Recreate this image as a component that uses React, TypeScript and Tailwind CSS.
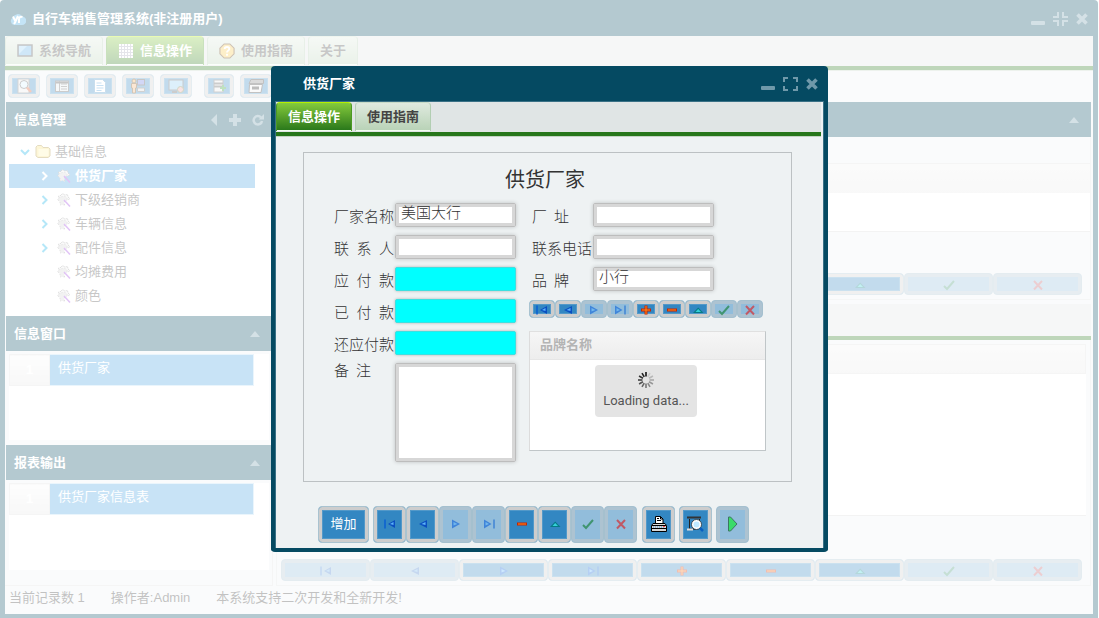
import type { ReactNode } from 'react'
import clsx from 'clsx'

type GlyphName = 'first' | 'prev' | 'next' | 'last' | 'plus' | 'minus' | 'up' | 'check' | 'cross'

type NavItem = { name: GlyphName; label: string; disabled?: boolean }

function Glyph({ name }: { name: GlyphName }) {
  return (
    <svg width="14" height="12" viewBox="0 0 14 12" className="shrink-0" aria-hidden="true">
      {name === 'first' && (
        <>
          <path d="M2 1.500v9" stroke="#0a5fd0" strokeWidth="1.500" />
          <path d="M12 2v8L5 6z" fill="#0a4fc0" />
          <path d="M10.500 4v3L7 6z" fill="#5cb4fa" />
        </>
      )}
      {name === 'prev' && (
        <>
          <path d="M11 2v8L3 6z" fill="#0a4fc0" />
          <path d="M9.500 4v3L5.500 6z" fill="#5cb4fa" />
        </>
      )}
      {name === 'next' && (
        <>
          <path d="M3 1.500v9L11 6z" fill="#0a5fd8" />
          <path d="M4.500 4v3.500L8.500 6z" fill="#5cb4fa" />
        </>
      )}
      {name === 'last' && (
        <>
          <path d="M12 1.500v9" stroke="#0a5fd0" strokeWidth="1.500" />
          <path d="M2 1.500v9L9.500 6z" fill="#0a5fd8" />
          <path d="M3.500 4v3.500L7 6z" fill="#5cb4fa" />
        </>
      )}
      {name === 'plus' && (
        <>
          <path d="M7 1.500v9M2 6h10" stroke="#c82400" strokeWidth="3" />
          <path d="M7 2v8M3 6h8" stroke="#ff8a1a" strokeWidth="1" />
        </>
      )}
      {name === 'minus' && (
        <>
          <path d="M2 6h10" stroke="#c82400" strokeWidth="3" />
          <path d="M3 6h8" stroke="#ff8a1a" strokeWidth="1" />
        </>
      )}
      {name === 'up' && (
        <>
          <path d="M2 9h10.500L7.200 3.500z" fill="#067a86" />
          <path d="M4.500 8h5.500L7.200 5z" fill="#35d0d8" />
        </>
      )}
      {name === 'check' && <path d="M2 7l3 3 7-8" fill="none" stroke="#0a7a2a" strokeWidth="2" />}
      {name === 'cross' && <path d="M3 2l8 8.500M11 2l-8 8.500" fill="none" stroke="#e01818" strokeWidth="2" />}
    </svg>
  )
}

function BlueButton({
  label,
  disabled,
  className,
  children,
}: {
  label: string
  disabled?: boolean
  className?: string
  children: ReactNode
}) {
  return (
    <button
      type="button"
      aria-label={label}
      disabled={disabled}
      className={clsx(
        'flex items-center justify-center overflow-hidden rounded border',
        disabled
          ? 'border-[#a5c0ce] bg-[#92bddb] shadow-[inset_0_0_0_3px_#adc3d1]'
          : 'border-[#a9c3d0] bg-[#3387c2] shadow-[inset_0_0_0_3px_#cdcdcd,inset_0_0_0_4px_#5399c9]',
        className,
      )}
    >
      <span className={clsx('flex items-center', disabled && 'opacity-60')}>{children}</span>
    </button>
  )
}

function NavButtons({ items, className }: { items: NavItem[]; className: string }) {
  return items.map((item) => (
    <BlueButton key={item.name} label={item.label} disabled={item.disabled} className={className}>
      <Glyph name={item.name} />
    </BlueButton>
  ))
}

const detailNav: NavItem[] = [
  { name: 'first', label: '第一条' },
  { name: 'prev', label: '上一条' },
  { name: 'next', label: '下一条', disabled: true },
  { name: 'last', label: '最后一条', disabled: true },
  { name: 'plus', label: '新增' },
  { name: 'minus', label: '删除' },
  { name: 'up', label: '编辑' },
  { name: 'check', label: '保存', disabled: true },
  { name: 'cross', label: '取消', disabled: true },
]

const formNav = detailNav.filter((item) => item.name !== 'plus')

const gridNav: NavItem[] = detailNav.map((item) => ({
  ...item,
  disabled: ['first', 'prev', 'check', 'cross'].includes(item.name),
}))

function WindowControls({ maximized }: { maximized?: boolean }) {
  return (
    <div className="flex items-center gap-2 text-[#7099aa]">
      <button type="button" aria-label="最小化">
        <svg width="14" height="14" viewBox="0 0 14 14">
          <rect y="9" width="14" height="4" rx="1" fill="currentColor" />
        </svg>
      </button>
      <button type="button" aria-label={maximized ? '还原' : '最大化'}>
        <svg width="15" height="14" viewBox="0 0 15 14" fill="none" stroke="currentColor" strokeWidth="2">
          {maximized ? (
            <path d="M5 0v5H0M10 0v5h5M5 14V9H0M10 14V9h5" />
          ) : (
            <path d="M1 5V1h4M10 1h4v4M1 9v4h4M10 13h4V9" />
          )}
        </svg>
      </button>
      <button type="button" aria-label="关闭">
        <svg width="12" height="14" viewBox="0 0 12 14">
          <path d="M1.500 2.500l9 9M10.500 2.500l-9 9" stroke="currentColor" strokeWidth="3.600" />
        </svg>
      </button>
    </div>
  )
}

function Tab({ active, children }: { active?: boolean; children: ReactNode }) {
  return (
    <button
      type="button"
      role="tab"
      aria-selected={!!active}
      className={clsx(
        'flex h-[29px] items-center gap-1.5 rounded-t border-x border-t px-[11px] font-bold shadow-[inset_0_-1px_0_#f2fff0]',
        active
          ? 'border-[#4c9a24] border-t-[#b4f000] bg-linear-to-b from-[#84cb3c] to-[#26761a] text-white'
          : 'border-[#b2ceb2] border-t-[#c8dcc8] bg-linear-to-b from-[#dfeadf] to-[#b8d2b6] text-[#444]',
      )}
    >
      {children}
    </button>
  )
}

function TabStrip({ children }: { children: ReactNode }) {
  return (
    <div
      role="tablist"
      className="flex h-[34px] items-start gap-[3px] border-b-4 border-[#26761a] bg-[#e0e5e5] shadow-[0_1px_0_#c3d3c3]"
    >
      {children}
    </div>
  )
}

function ScreenIcon() {
  return (
    <svg width="16" height="16" viewBox="0 0 16 16">
      <rect x="1" y="2" width="14" height="11" fill="#5fb0e6" stroke="#444" strokeWidth="1.500" />
      <path d="M2 3h8L2 11z" fill="#9bd4f7" />
    </svg>
  )
}

function TableIcon() {
  return (
    <svg width="16" height="16" viewBox="0 0 16 16">
      <rect x="1" y="1" width="14" height="14" fill="#fff" />
      <path d="M1 3.500h14M1 6.500h14M1 9.500h14M1 12.500h14M3.500 1v14M6.500 1v14M9.500 1v14M12.500 1v14" stroke="#a8a8b8" />
    </svg>
  )
}

function HelpIcon() {
  return (
    <svg width="16" height="16" viewBox="0 0 17 17">
      <path d="M5.500 1h6L16 5.500v6L11.500 16h-6L1 11.500v-6z" fill="#f8c84c" stroke="#5a3408" strokeWidth="1.200" />
      <path d="M6 6.500c0-3 5-3 5 0 0 1.500-2.500 1.500-2.500 3.500" fill="none" stroke="#fff" strokeWidth="2" />
      <rect x="7.500" y="11.500" width="2" height="2" fill="#fff" />
    </svg>
  )
}

const toolIcons: { label: string; wide: boolean; icon: ReactNode }[] = [
  {
    label: '查询',
    wide: true,
    icon: (
      <>
        <rect x="2" y="1" width="11" height="14" fill="#e8e8e8" stroke="#777" />
        <circle cx="8" cy="6.500" r="4" fill="#d6f0ff" stroke="#555" />
        <path d="M11 9.500l4 4.500" stroke="#d8542a" strokeWidth="2.500" />
      </>
    ),
  },
  {
    label: '列表',
    wide: true,
    icon: (
      <>
        <rect x="1.500" y="3" width="13" height="10.500" fill="#dfe6ec" stroke="#555" />
        <path d="M5.500 3v10M7 6h6M7 8.500h6M7 11h6" stroke="#666" />
        <path d="M2 4.500h12" stroke="#444" strokeWidth="2" />
      </>
    ),
  },
  {
    label: '单据',
    wide: true,
    icon: (
      <>
        <path d="M2.500 1.500h8l3 3v10h-11z" fill="#fff" stroke="#4c8fc4" />
        <path d="M4.500 5h5M4.500 7.500h7M4.500 10h7M4.500 12.500h5" stroke="#4c9ad6" />
      </>
    ),
  },
  {
    label: '用户',
    wide: true,
    icon: (
      <>
        <rect x="7.500" y="1.500" width="7" height="5.500" fill="#6a78e0" stroke="#444" />
        <path d="M7.500 10h7v3.500h-7z" fill="#d8d8d8" stroke="#666" />
        <circle cx="4" cy="3" r="2" fill="#f3b050" stroke="#6a4010" />
        <path d="M1.500 5.500h5v4.500H5.500v5h-3v-5h-1z" fill="#f0b070" stroke="#6a4010" />
      </>
    ),
  },
  {
    label: '显示',
    wide: true,
    icon: (
      <>
        <rect x="1" y="2" width="14" height="10" fill="#8ecbf2" stroke="#555" />
        <circle cx="12.500" cy="11.500" r="3" fill="#e8a0a0" stroke="#6a7a3a" />
        <path d="M4 14h5" stroke="#555" strokeWidth="2" />
      </>
    ),
  },
  {
    label: '导入',
    wide: false,
    icon: (
      <>
        <rect x="3" y="2" width="9" height="12" fill="#e6e6e6" stroke="#666" />
        <path d="M3 5.500h9M3 8.500h9" stroke="#555" strokeWidth="2" />
        <path d="M12 7v6M9 10h6" stroke="#2a9a2a" strokeWidth="2" />
      </>
    ),
  },
  {
    label: '打印',
    wide: true,
    icon: (
      <>
        <path d="M3 1.500h12.500v4H1z" fill="#888" stroke="#333" />
        <path d="M1.500 6.500h13l-1.500 8H1z" fill="#eee" stroke="#333" />
        <path d="M4 10h7" stroke="#222" strokeWidth="3" />
      </>
    ),
  },
]

function Caret() {
  return (
    <svg width="10" height="6" viewBox="0 0 10 6" className="text-[#7099aa]">
      <path d="M5 0l5 6H0z" fill="currentColor" />
    </svg>
  )
}

function PanelHeader({ title, children }: { title?: string; children: ReactNode }) {
  return (
    <header className="flex h-[35px] shrink-0 items-center justify-between bg-[#054a62] pr-3 pl-2 font-bold text-white">
      <h2>{title}</h2>
      {children}
    </header>
  )
}

function ReportIcon() {
  return (
    <svg width="16" height="16" viewBox="0 0 16 16">
      <path
        d="M1.500 8l1.500-1.500L2.500 4 5 3.500 6.500 1.500 9 3l2.500-.5.5 2.500L14 6.500 12 8"
        fill="#eee"
        stroke="#777"
        strokeDasharray="1 1"
      />
      <path d="M2 8l2 2v3l3-.5L8.500 14V9L12 7.500 9 4 4 5z" fill="#d2d2d2" stroke="#999" strokeDasharray="1 2" />
      <path d="M8 8l6 6.500" stroke="#9a3ae0" strokeWidth="1.500" />
    </svg>
  )
}

const treeItems = [
  { text: '供货厂家', branch: true, selected: true },
  { text: '下级经销商', branch: true },
  { text: '车辆信息', branch: true },
  { text: '配件信息', branch: true },
  { text: '均摊费用' },
  { text: '颜色' },
]

function Tree() {
  return (
    <ul className="h-[179px] overflow-hidden bg-white px-[3px] pt-[3px] text-[#444]">
      <li className="flex h-6 items-center gap-1 pl-2.5">
        <svg width="12" height="10" viewBox="0 0 12 10">
          <path d="M2 3l4 4 4-4" fill="none" stroke="#08b0e8" strokeWidth="2" />
        </svg>
        <svg width="16" height="16" viewBox="0 0 16 16">
          <path d="M1 12V3l1.500-1.500h4L8 3.500h5.500L15 5v7l-2 1.500H3z" fill="#f8e27a" stroke="#a58a30" />
          <path d="M3.500 5h10v7h-10z" fill="#fff3b0" />
        </svg>
        基础信息
      </li>
      {treeItems.map((item) => (
        <li
          key={item.text}
          className={clsx(
            'mr-3.5 flex h-6 items-center pl-[29px]',
            item.selected && 'bg-[#48a2e1] font-bold text-white',
          )}
        >
          <span className="w-[18px]">
            {item.branch && (
              <svg
                width="12"
                height="12"
                viewBox="0 0 12 12"
                className={item.selected ? 'text-white' : 'text-[#08b0e8]'}
              >
                <path d="M4.500 2l4 4-4 4" fill="none" stroke="currentColor" strokeWidth="2" />
              </svg>
            )}
          </span>
          <ReportIcon />
          <a href="#" className="ml-[3px]">
            {item.text}
          </a>
        </li>
      ))}
    </ul>
  )
}

function RowList({ text, className }: { text: string; className?: string }) {
  return (
    <div className={clsx('mx-[3px] mt-[3px] bg-white', className)}>
      <table className="h-8 w-[245px] border-collapse text-left text-white">
        <tbody>
          <tr>
            <td className="w-10 border border-[#dcdcdc] bg-linear-to-b from-[#f9f9f9] to-[#e6e6e6] text-center font-bold">1</td>
            <td className="border border-[#b8dcf4] bg-[#48a2e1] px-2 pb-1">{text}</td>
          </tr>
        </tbody>
      </table>
    </div>
  )
}

function Sidebar() {
  return (
    <aside className="flex w-[268px] shrink-0 flex-col border-r border-b border-[#dcdcdc] pl-px">
      <div className="flex h-8 items-center gap-1.5 pl-0.5">
        {toolIcons.map((tool) => (
          <BlueButton
            key={tool.label}
            label={tool.label}
            className={clsx('h-6 shrink-0', tool.wide ? 'w-8' : 'ml-1.5 w-[30px]')}
          >
            <svg width="16" height="16" viewBox="0 0 16 16">
              {tool.icon}
            </svg>
          </BlueButton>
        ))}
      </div>
      <PanelHeader title="信息管理">
        <span className="-mr-1 flex items-center gap-[11px] text-[#7099aa]">
          <svg width="7" height="12" viewBox="0 0 7 12">
            <path d="M6 0v12L0 6z" fill="currentColor" />
          </svg>
          <svg width="12" height="12" viewBox="0 0 12 12">
            <path d="M6 0v12M0 6h12" stroke="currentColor" strokeWidth="4" />
          </svg>
          <svg width="12" height="13" viewBox="0 0 12 13">
            <path d="M9 4.500A4.200 4.200 0 1 0 10 8" fill="none" stroke="currentColor" strokeWidth="2.500" />
            <path d="M12 1v5.500H6.500z" fill="currentColor" />
          </svg>
        </span>
      </PanelHeader>
      <Tree />
      <PanelHeader title="信息窗口">
        <Caret />
      </PanelHeader>
      <RowList text="供货厂家" className="mb-[5px] h-[86px]" />
      <PanelHeader title="报表输出">
        <Caret />
      </PanelHeader>
      <RowList text="供货厂家信息表" className="mb-[15px] flex-1" />
    </aside>
  )
}

function MainContent() {
  return (
    <main className="ml-[3px] flex min-w-0 flex-1 flex-col pt-8 pr-0.5">
      <PanelHeader>
        <Caret />
      </PanelHeader>
      <section className="border-x border-b border-[#dde2e2] pt-[26px]">
        <div className="h-[30px] border-t border-[#ddd] bg-linear-to-b from-[#f2f2f2] to-[#e8e8e8]" />
        <div className="h-[39px] border-b border-[#d8d8d8] bg-white" />
        <div className="mt-[41px] mr-2 mb-1 ml-1 grid grid-cols-9">
          <NavButtons items={gridNav} className="h-[22px] pt-0.5" />
        </div>
      </section>
      <div className="mt-1 h-9 border-b-4 border-[#26761a] bg-[#e0e5e5]" />
      <section className="flex flex-1 flex-col border-x border-b border-[#dde2e2] pt-1">
        <div className="mr-1 h-[30px] border border-[#ddd] bg-linear-to-b from-[#f2f2f2] to-[#e8e8e8]" />
        <div className="mr-1 flex-1 border-b border-[#d8d8d8] bg-white" />
        <div className="mt-[43px] mr-2 mb-1 ml-1 grid grid-cols-9">
          <NavButtons items={gridNav} className="h-[22px] pt-0.5" />
        </div>
      </section>
    </main>
  )
}

function MainWindow() {
  return (
    <div className="mr-px flex min-h-screen flex-col rounded-t bg-[#054a62] px-[5px] pb-1">
      <header className="flex h-9 items-center justify-between pt-0.5 pr-[5px] pl-[5px]">
        <div className="flex items-center gap-1.5 font-bold text-white">
          <svg width="16" height="14" viewBox="0 0 16 14">
            <path d="M4 13a4 4 0 0 1-1-7.500 5 5 0 0 1 9-1A4 4 0 0 1 12 13z" fill="#3ba5e0" />
            <path d="M3 4.500l2.500 5L8 4M5.500 9.500L4 12M9 11V7.500c0-2.500 1.500-3 3.500-2.500" fill="none" stroke="#fff" strokeWidth="2" />
          </svg>
          <h1>自行车销售管理系统(非注册用户)</h1>
        </div>
        <WindowControls maximized />
      </header>
      <div className="flex flex-1 flex-col bg-[#eef2f3]">
        <TabStrip>
          <Tab>
            <ScreenIcon />
            系统导航
          </Tab>
          <Tab active>
            <TableIcon />
            信息操作
          </Tab>
          <Tab>
            <HelpIcon />
            使用指南
          </Tab>
          <Tab>关于</Tab>
        </TabStrip>
        <div className="flex flex-1">
          <Sidebar />
          <MainContent />
        </div>
        <footer className="flex h-7 items-center gap-[26px] px-1 pb-1 text-[#333]">
          <span>当前记录数 1</span>
          <span>操作者:Admin</span>
          <span>本系统支持二次开发和全新开发!</span>
        </footer>
      </div>
    </div>
  )
}

const inputClass =
  'w-[121px] rounded-xs border border-[#bdbdbd] bg-white px-[5px] text-[15px] text-[#333] outline-none shadow-[inset_0_0_0_3px_#d7d7d7,0_0_4px_#00000033]'

function Field({ id, label, value, total, short }: {
  id: string
  label: string
  value?: string
  total?: boolean
  short?: boolean
}) {
  return (
    <div className="flex h-6">
      <div className="w-[61px] shrink-0">
        <label
          htmlFor={id}
          className={clsx(
            'block pt-1 text-[15px] leading-5 font-light whitespace-nowrap [text-align-last:justify]',
            short ? 'w-[37px]' : 'w-[60px]',
          )}
        >
          {label}
        </label>
      </div>
      <input
        id={id}
        defaultValue={value}
        className={
          total
            ? 'w-[121px] rounded-xs border border-[#3ee0e0] bg-[#00ffff] px-1.5 shadow-[0_0_3px_#00000044] outline-none'
            : clsx(inputClass, 'pb-1 font-light')
        }
      />
    </div>
  )
}

function Spinner() {
  return (
    <svg width="16" height="16" viewBox="0 0 16 16" stroke="#111" strokeWidth="1.600">
      {Array.from({ length: 12 }, (_, i) => (
        <path key={i} d="M8 0v4.500" transform={`rotate(${-i * 30} 8 8)`} opacity={1 - i * 0.08} />
      ))}
    </svg>
  )
}

function BrandGrid() {
  return (
    <div className="relative h-[120px] border border-[#c0c6c8] border-t-[#e0e0e0] border-l-[#dcdcdc] bg-white">
      <table className="w-full border-collapse">
        <thead>
          <tr>
            <th className="h-7 border-b border-[#e6e6e6] bg-linear-to-b from-[#f6f6f6] to-[#ededed] px-2.5 text-left font-bold text-[#b4b4b4]">
              品牌名称
            </th>
          </tr>
        </thead>
      </table>
      <div
        role="status"
        className="absolute top-[33px] left-[65px] flex h-[52px] w-[102px] flex-col items-center justify-center gap-1 rounded-sm bg-[#e4e4e4] font-[Roboto] text-[13px] leading-[18px] whitespace-nowrap text-[#555]"
      >
        <Spinner />
        Loading data...
      </div>
    </div>
  )
}

function SupplierForm() {
  return (
    <section className="mt-4 mr-[31px] ml-[27px] border border-[#bcc1c3] pt-[13px] pr-[25px] pb-[19px] pl-[30px] text-[#333]">
      <h3 className="mb-[9px] pr-2.5 text-center text-[20px] leading-7">供货厂家</h3>
      <div className="flex gap-[13px]">
        <div className="flex flex-col gap-2">
          <Field id="name" label="厂家名称" value="美国大行" />
          <Field id="contact" label="联 系 人" />
          <Field id="payable" label="应 付 款" total />
          <Field id="paid" label="已 付 款" total />
          <Field id="unpaid" label="还应付款" total />
          <div className="flex">
            <div className="w-[61px] shrink-0">
              <label
                htmlFor="remark"
                className="block w-[37px] text-[15px] leading-4 font-light [text-align-last:justify]"
              >
                备 注
              </label>
            </div>
            <textarea id="remark" className={clsx(inputClass, 'block h-[99px] resize-none')} />
          </div>
        </div>
        <div className="min-w-0 flex-1">
          <div className="mb-[9px] flex flex-col gap-2 pl-[3px]">
            <Field id="address" label="厂 址" short />
            <Field id="phone" label="联系电话" />
            <Field id="brand" label="品 牌" value="小行" short />
          </div>
          <div className="mb-[13px] flex">
            <NavButtons items={detailNav} className="h-[18px] w-[26px] pt-[3px]" />
          </div>
          <BrandGrid />
        </div>
      </div>
    </section>
  )
}

function SupplierDialog() {
  return (
    <div
      role="dialog"
      aria-labelledby="dialog-title"
      className="w-[557px] rounded border-4 border-t-0 border-[#054a62] bg-[#eef2f3]"
    >
      <header className="flex h-9 items-center justify-between border-b border-[#3a7186] bg-[#054a62] pt-0.5 pr-1.5 pl-7">
        <h2 id="dialog-title" className="font-bold text-white">
          供货厂家
        </h2>
        <WindowControls />
      </header>
      <div className="border-x border-[#3a7186]">
        <div className="mr-0.5">
          <TabStrip>
            <Tab active>信息操作</Tab>
            <Tab>使用指南</Tab>
          </TabStrip>
        </div>
        <SupplierForm />
        <div className="mt-6 flex gap-1 pb-[5px] pl-[42px]">
          <BlueButton label="增加" className="h-[37px] w-[51px]">
            <span className="text-[13px] text-white">增加</span>
          </BlueButton>
          <div className="flex">
            <NavButtons items={formNav} className="h-[37px] w-[33px]" />
          </div>
          <BlueButton label="打印" className="ml-px h-[37px] w-[33px]">
            <svg width="16" height="16" viewBox="0 0 16 16">
              <path d="M4.500 7V.5h5l2.500 2.500v4" fill="#fff" stroke="#000" />
              <path d="M6 2.500h2M6 4.500h4M9.500.5V3H12" stroke="#000" fill="none" />
              <path d="M2 7.500h12l1.500 2v6H.5v-6z" fill="#d8d8d8" stroke="#000" />
              <path d="M1 9.500h14M1 12.500h14" stroke="#000" />
              <path d="M2 11h11" stroke="#4a90d0" strokeDasharray="1 1" />
              <rect x="12" y="10" width="2" height="1" fill="#f44" />
            </svg>
          </BlueButton>
          <BlueButton label="预览" className="h-[37px] w-[33px]">
            <svg width="17" height="16" viewBox="0 0 17 16">
              <path d="M0 1.500h14" stroke="#333" strokeWidth="2" />
              <path d="M2.500 3v10h6M12.500 3v3" fill="none" stroke="#222" />
              <path d="M0 13.500h6" stroke="#ddd" strokeWidth="2" />
              <circle cx="9.500" cy="8.500" r="4" fill="#bfe8ff" stroke="#fff" strokeWidth="2" />
              <circle cx="9.500" cy="8.500" r="5" fill="none" stroke="#222" strokeWidth=".7" />
              <path d="M13 12l3 3" stroke="#0a5fc0" strokeWidth="2.500" />
            </svg>
          </BlueButton>
          <BlueButton label="执行" disabled className="h-[37px] w-[33px]">
            <svg width="12" height="16" viewBox="0 0 12 16">
              <path d="M1.500 1h2L10 8l-6.500 7h-2z" fill="#00f020" stroke="#044a14" />
            </svg>
          </BlueButton>
        </div>
      </div>
    </div>
  )
}

export default function App() {
  return (
    <div className="relative min-h-screen bg-white font-['Liberation_Sans','Noto_Sans_CJK_SC',sans-serif] text-[13px] leading-5">
      <MainWindow />
      <div className="absolute inset-0 bg-white/70" />
      <div className="absolute inset-0 flex items-center justify-center pb-px">
        <SupplierDialog />
      </div>
    </div>
  )
}
